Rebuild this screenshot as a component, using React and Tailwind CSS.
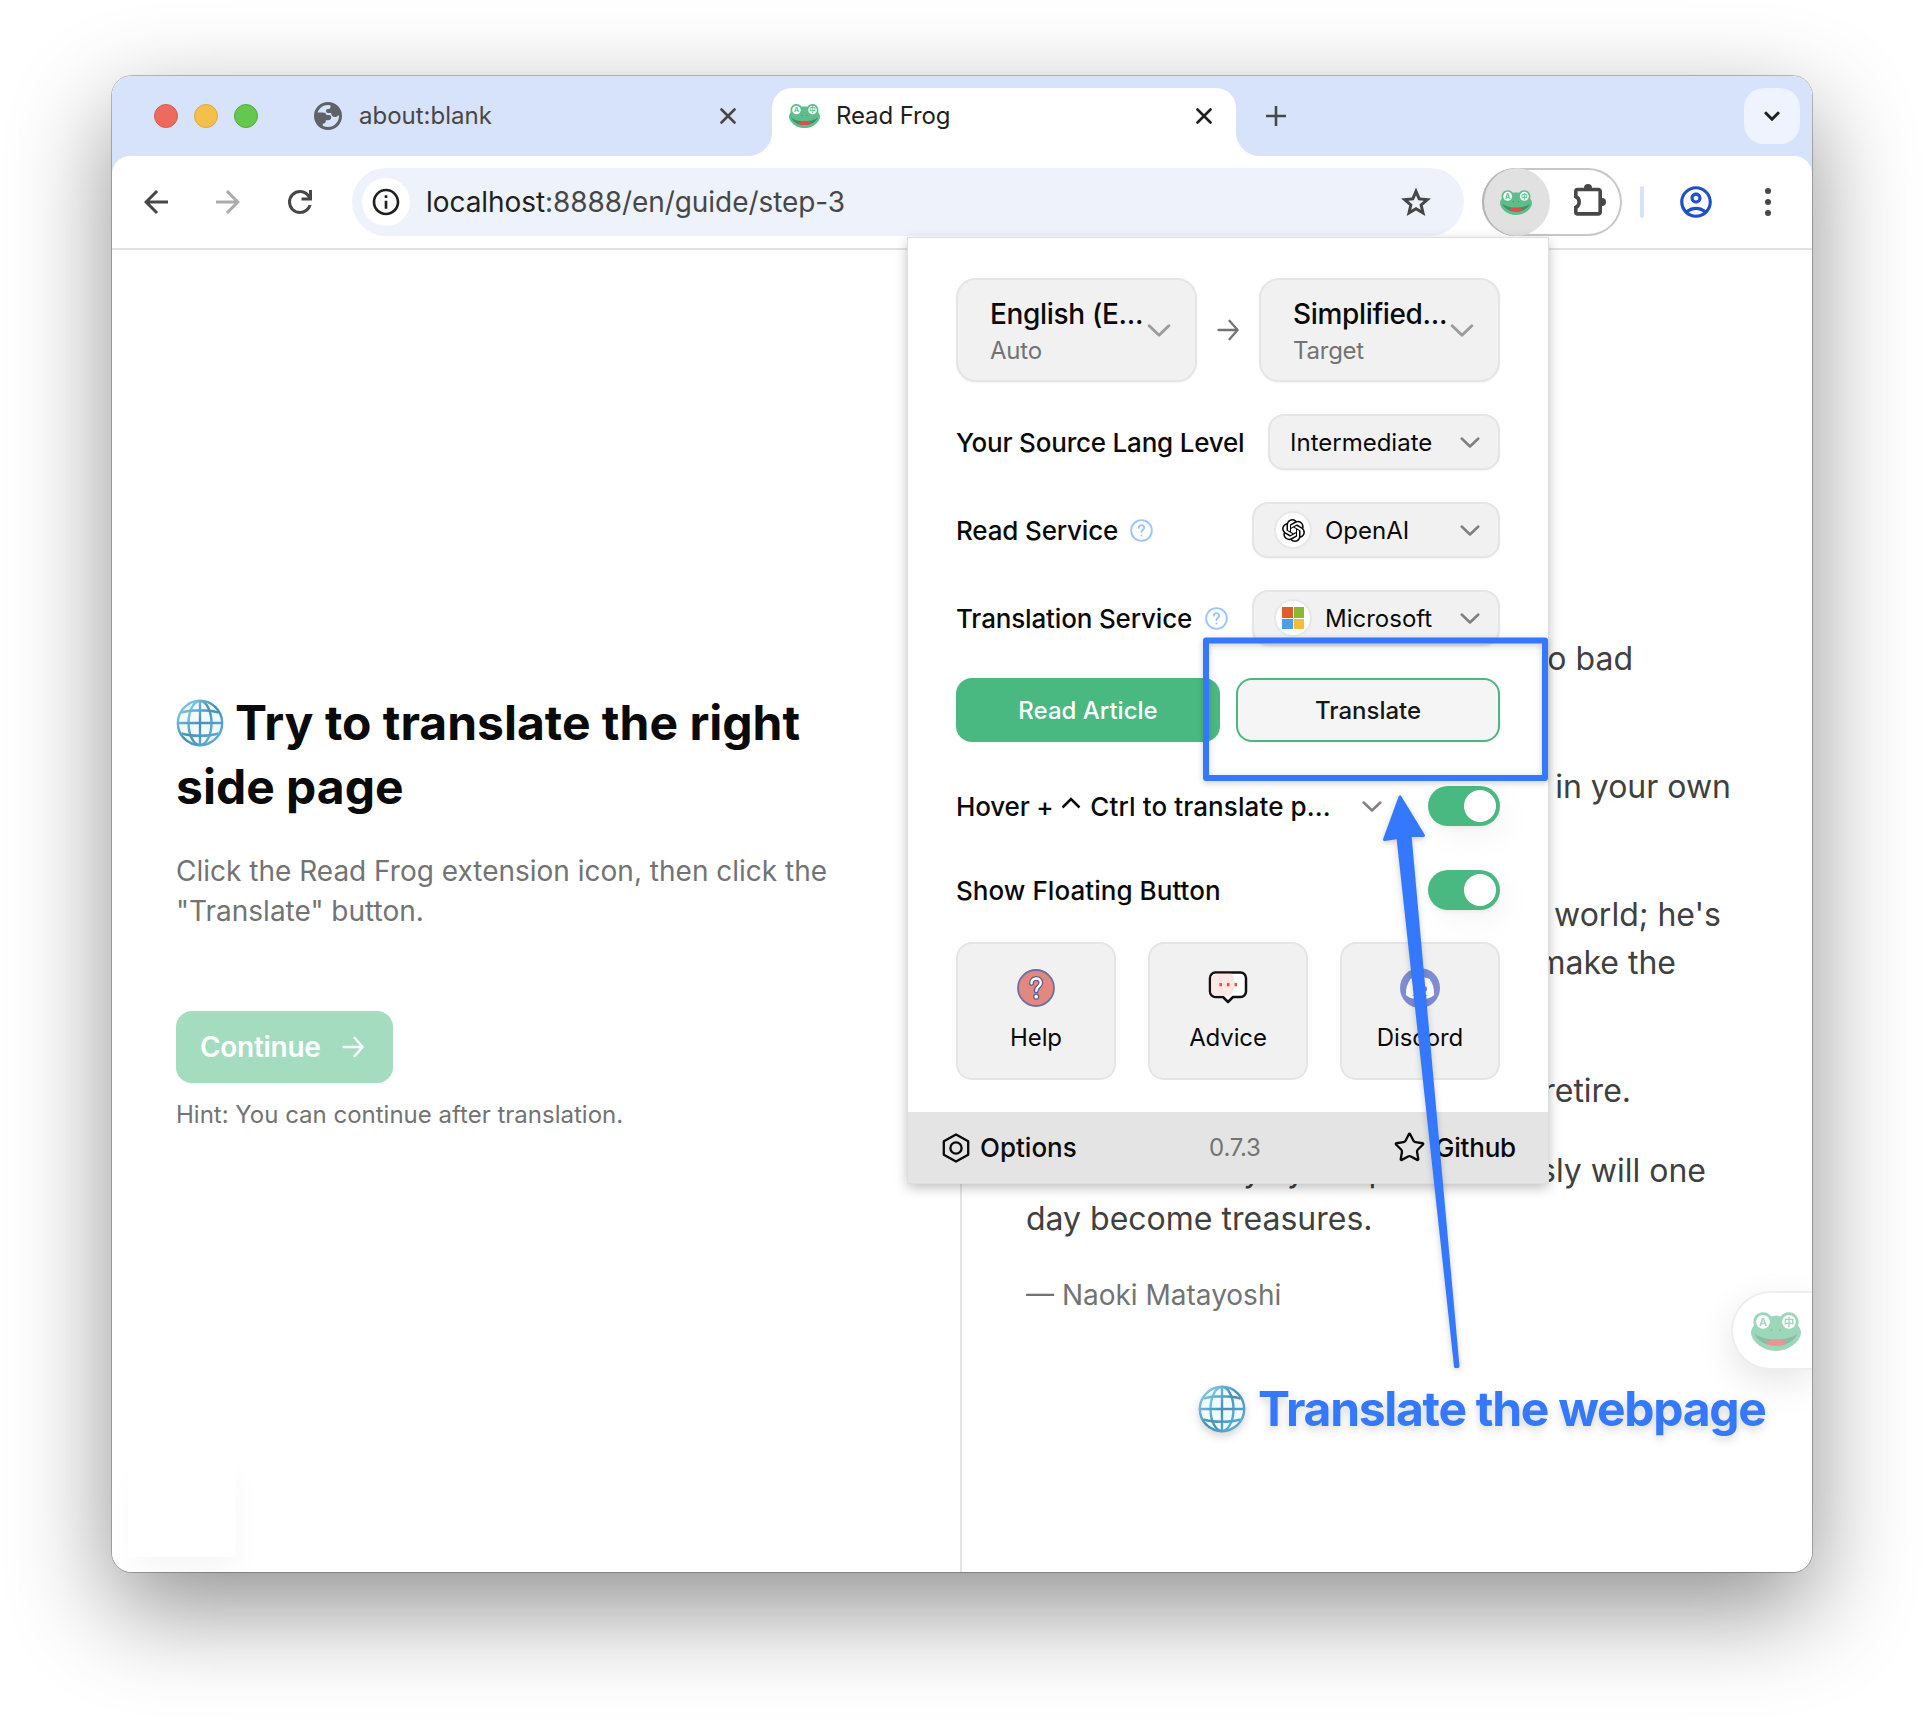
import React from "react";
import { MdArrowBack, MdArrowForward, MdInfoOutline, MdOutlineAccountCircle } from "react-icons/md";
import { SiOpenai, SiDiscord } from "react-icons/si";
import { Star } from "lucide-react";

function Frog({ className }) {
  return (
    <svg viewBox="0 0 50 39" className={className}>
      <path
        d="M12 0.2c3.6 0 6.6 1.700 8.300 4.200 3-.7 6.400-.7 9.400 0C31.400 1.900 34.400 .2 38 .2c5.500 0 9.600 4.400 9.600 9.600 0 1.300-.2 2.500-.6 3.600C49 15.600 50 18.300 50 20.600 50 29 38.500 39 25 39S0 29 0 20.600c0-2.300 1-5 3-7.200-.4-1.100-.6-2.300-.6-3.600C2.400 4.600 6.500 .2 12 .2Z"
        fill="#5dbe8c"
      />
      <path d="M3.300 21.600C9 26 17 27.600 25 27.600s16-1.600 21.700-6C43.500 29.500 34 34 25 34S6.500 29.500 3.300 21.600Z" fill="#3f9068" />
      <path d="M14 31.300c2.500-2.700 6.500-3.800 11-3.800s8.500 1.100 11 3.800C32.500 33.200 28.700 34 25 34s-7.500-.8-11-2.700Z" fill="#dd4f4f" />
      <circle cx="12" cy="9.800" r="6.900" fill="#fff" />
      <circle cx="38" cy="9.800" r="6.900" fill="#fff" />
      <circle cx="20.500" cy="18.300" r="1" fill="#3f9068" />
      <circle cx="29" cy="18.300" r="1" fill="#3f9068" />
      <text x="12" y="13.700" fontSize="11" fontWeight="700" textAnchor="middle" fill="#5dbe8c" fontFamily="Inter, sans-serif">A</text>
      <text x="38" y="13.700" fontSize="10.500" fontWeight="700" textAnchor="middle" fill="#5dbe8c" fontFamily='"Noto Sans CJK SC", sans-serif'>中</text>
    </svg>
  );
}

function GlobeEmoji({ className, id }) {
  return (
    <svg viewBox="0 0 48 48" fill="none" className={className}>
      <defs>
        <linearGradient id={id} x1="0" y1="0" x2="1" y2="1">
          <stop offset="0" stopColor="#8fd8f2" />
          <stop offset="0.500" stopColor="#4690b8" />
          <stop offset="1" stopColor="#63b4dd" />
        </linearGradient>
      </defs>
      <circle cx="24" cy="24" r="22" fill="#f3fafd" />
      <g stroke={`url(#${id})`} strokeWidth="2.400">
        <circle cx="24" cy="24" r="22.200" />
        <ellipse cx="24" cy="24" rx="11.500" ry="22" />
        <path d="M24.010 2 24 46M2 24l44 .010M5.500 13.500C16 10.500 32 10.500 42.500 13.500M5.500 34.500C16 37.500 32 37.500 42.500 34.500" />
      </g>
    </svg>
  );
}

const EarthIcon = ({ className }) => (
  <svg viewBox="0 0 28 28" className={className} fill="#5f6368">
    <circle cx="14" cy="14" r="12.500" fill="none" stroke="#5f6368" strokeWidth="3" />
    <path d="M2 10.500h6.500c3 0 3.500 1.200 4 2.500h2.500c1.800 0 2.200 1.400 2.200 2.500 0 2-1.200 2.700-3.200 2.700h-2.200c0 3-1 3.300-3 3.300v3.500C3 22 .500 16 2 10.500Z" />
    <path d="M16.500 1.800v3.400c0 1-1 1.800-2.800 1.800-1 0-1.700.8-1.700 2s.8 2 2 2h3.200c0 2.500 1.300 4 3.800 4 1.600 0 2.500-.7 3-1.500h3C27 8 22.500 2.500 16.500 1.800Z" />
  </svg>
);

const CloseIcon = ({ className }) => (
  <svg viewBox="0 0 16 16" className={className} stroke="currentColor" strokeWidth="2.600" strokeLinecap="round">
    <path d="M1.500 1.500l13 13M14.500 1.500l-13 13" />
  </svg>
);

const ArrowRight = ({ className }) => (
  <svg viewBox="0 0 22 22" className={className} fill="none" stroke="currentColor" strokeWidth="2.300" strokeLinecap="round" strokeLinejoin="round">
    <path d="M1.500 11h19M12.500 1.800 20.600 11l-8.100 9.200" />
  </svg>
);

const Chevron = ({ className }) => (
  <svg viewBox="0 0 20 11" className={className} fill="none" stroke="currentColor" strokeWidth="2.500" strokeLinecap="round" strokeLinejoin="round">
    <path d="M1.700 1.500 10 9.500l8.300-8" />
  </svg>
);

const HelpHint = ({ className }) => (
  <svg viewBox="0 0 24 24" className={className} fill="none" stroke="currentColor" strokeWidth="2" strokeLinecap="round" strokeLinejoin="round">
    <circle cx="12" cy="12" r="10.800" />
    <path d="M9.200 9.200C9.200 7.500 10.400 6.400 12 6.400s2.800 1.100 2.800 2.700c0 2.200-2.800 2.200-2.800 4.500M12 17.300h.010" />
  </svg>
);

const Microsoft = () => (
  <div className="grid size-[22px] grid-cols-2 gap-px">
    <div className="bg-[#e15b2e]" />
    <div className="bg-[#8cb82f]" />
    <div className="bg-[#4a9fe8]" />
    <div className="bg-[#f2bc3c]" />
  </div>
);

const HelpIcon = () => (
  <svg viewBox="0 0 40 40" className="size-10" fill="none" strokeLinecap="round">
    <circle cx="20" cy="20" r="18" fill="#e38781" stroke="#6a6fa5" strokeWidth="1.800" />
    <path d="M15.500 15.200c0-3 2-4.700 4.600-4.700s4.700 1.700 4.700 4.300c0 3.500-4.500 3.700-4.500 8" stroke="#5a5f98" strokeWidth="5" />
    <path d="M15.500 15.200c0-3 2-4.700 4.600-4.700s4.700 1.700 4.700 4.300c0 3.500-4.500 3.700-4.500 8" stroke="#fff" strokeWidth="2.400" />
    <circle cx="20.200" cy="28.700" r="2.500" fill="#fff" stroke="#5a5f98" strokeWidth="1.300" />
  </svg>
);

const AdviceIcon = () => (
  <svg viewBox="0 0 40 40" className="size-10" fill="none">
    <path
      d="M7.500 4.500h25A5.500 5.500 0 0 1 38 10v13.500a5.500 5.500 0 0 1-5.500 5.500H25l-5 5-5-5H7.500A5.500 5.500 0 0 1 2 23.500V10a5.500 5.500 0 0 1 5.500-5.500Z"
      fill="#fff"
      stroke="#111"
      strokeWidth="2.500"
      strokeLinejoin="round"
    />
    <path d="M3.200 10A4.500 4.500 0 0 1 8 5.700h15.500c5 6.500 4.500 15.500-1 22H8a4.700 4.700 0 0 1-4.800-4.500Z" fill="#fde8e6" />
    <path d="M12.700 15v3.200M20.200 15v3.200M27.800 15v3.200" stroke="#e5533f" strokeWidth="2.600" />
  </svg>
);

const DiscordIcon = () => (
  <div className="flex size-10 items-center justify-center rounded-full bg-[#7f8cd1] text-white">
    <SiDiscord className="size-7" />
  </div>
);

function TabStrip() {
  return (
    <div className="flex h-20 bg-[#d7e2fb] pl-[42px] pr-3">
      <div className="flex h-full items-center gap-4">
        <div className="size-6 rounded-full border border-[#d65a4d] bg-[#ec6b5e]" />
        <div className="size-6 rounded-full border border-[#dda83c] bg-[#f4bf4b]" />
        <div className="size-6 rounded-full border border-[#55ab3e] bg-[#64c74f]" />
      </div>
      <div className="ml-14 flex h-20 w-[458px] items-center text-2xl text-[#474747]">
        <EarthIcon className="size-7" />
        <span className="ml-[17px]">about:blank</span>
        <CloseIcon className="ml-auto mr-9 size-4" />
      </div>
      <div className="relative mt-3 flex h-[68px] w-[464px] rounded-t-[20px] bg-white pl-[17px] pr-6 text-[#1f1f1f]">
        <div className="absolute -left-6 bottom-0 size-6 bg-[radial-gradient(circle_at_0_0,transparent_23.5px,#fff_24.500px)]" />
        <div className="absolute -right-6 bottom-0 size-6 bg-[radial-gradient(circle_at_100%_0,transparent_23.5px,#fff_24.500px)]" />
        <div className="flex h-14 w-full items-center text-2xl tracking-[-0.005em]">
          <Frog className="w-[31px]" />
          <span className="ml-4">Read Frog</span>
          <CloseIcon className="ml-auto size-4" />
        </div>
      </div>
      <svg viewBox="0 0 20 20" className="ml-[30px] mt-[30px] size-5 text-[#474747]" stroke="currentColor" strokeWidth="2.600">
        <path d="M10 0v20M0 10h20" />
      </svg>
      <div className="ml-auto mt-3 flex size-14 items-center justify-center rounded-[20px] bg-[#eef3fe]">
        <svg viewBox="0 0 16 10" className="h-2.5 w-4" fill="none" stroke="#1f1f1f" strokeWidth="3">
          <path d="M1 1.200 8 8.200l7-7" />
        </svg>
      </div>
    </div>
  );
}

function Toolbar() {
  return (
    <div className="bg-[#d7e2fb]">
      <div className="flex h-[94px] items-start rounded-t-[18px] border-b-2 border-[#e2e2e2] bg-white pl-[26px] pt-3">
        <div className="flex h-[68px] items-center gap-9 text-[#474747]">
          <MdArrowBack className="size-9" />
          <MdArrowForward className="size-9 text-[#ababab]" />
          <svg viewBox="0 -960 960 960" className="size-9" fill="currentColor">
            <path d="M480-160q-134 0-227-93t-93-227q0-134 93-227t227-93q69 0 132 28.500T720-690v-110h80v280H520v-80h168q-32-56-87.500-88T480-720q-100 0-170 70t-70 170q0 100 70 170t170 70q77 0 139-44t87-116h84q-28 106-114 173t-196 67Z" />
          </svg>
        </div>
        <div className="ml-[34px] flex h-[68px] w-[1112px] items-center rounded-full bg-[#edf2fb] pl-[10px] pr-[30px]">
          <div className="flex size-12 items-center justify-center rounded-full bg-white text-[#1f1f1f]">
            <MdInfoOutline className="size-8" />
          </div>
          <span className="ml-4 text-[28px] leading-none tracking-[-0.0025em] text-[#474747]">
            <span className="text-[#1f1f1f]">localhost</span>:8888/en/guide/step-3
          </span>
          <svg viewBox="0 -960 960 960" className="mb-[3px] ml-auto size-9" fill="#474747">
            <path d="m354-247 126-76 126 77-33-144 111-96-146-13-58-136-58 135-146 13 111 97-33 143ZM233-80l65-281L80-550l288-25 112-265 112 265 288 25-218 189 65 281-247-149L233-80Z" />
          </svg>
        </div>
        <div className="ml-[18px] flex h-[68px] w-[140px] items-center rounded-full shadow-[inset_0_0_0_2px_#c7c7c7]">
          <div className="flex size-[68px] items-center justify-center rounded-full bg-[#e1e1e1] shadow-[inset_2px_0_0_0_#b4b4b4]">
            <Frog className="mt-px w-8" />
          </div>
          <svg viewBox="0 0 36 36" className="ml-[22px] size-9" fill="none" stroke="#474747" strokeWidth="3.600">
            <path d="M3.800 12.500V7.300a1.800 1.800 0 0 1 1.800-1.800h20.800a1.800 1.800 0 0 1 1.800 1.800v20.800a1.800 1.800 0 0 1-1.800 1.800H5.600a1.800 1.800 0 0 1-1.800-1.800v-4.600c4.500-2 4.500-9 0-11Z" className="[stroke-dasharray:none]" />
            <path d="M12 4a4 4 0 0 1 8 0ZM30 14a4 4 0 0 1 0 8Z" fill="#474747" stroke="none" />
            <path d="M1 13.700c4 0 4 8.600 0 8.600Z" fill="#fff" stroke="none" />
          </svg>
        </div>
        <div className="flex h-[68px] items-center">
          <div className="ml-[18px] h-8 w-1 rounded-full bg-[#d6e2fb]" />
          <MdOutlineAccountCircle className="ml-[33px] size-[38px] text-[#1f50c8]" />
          <div className="ml-[50px] flex flex-col gap-[5px]">
            <div className="size-1.5 rounded-full bg-[#474747]" />
            <div className="size-1.5 rounded-full bg-[#474747]" />
            <div className="size-1.5 rounded-full bg-[#474747]" />
          </div>
        </div>
      </div>
    </div>
  );
}

function LeftPane() {
  return (
    <div className="w-[848px] pl-16 pt-[441px]">
      <h1 className="text-[48px] font-bold leading-[64px] text-[#0a0a0a]">
        <span className="flex h-16 items-center">
          <GlobeEmoji id="g1" className="mr-[11px] size-12" />
          Try to translate the right
        </span>
        side page
      </h1>
      <p className="mt-8 text-[28px] leading-10 text-[#737373]">
        Click the Read Frog extension icon, then click the
        <br />
        "Translate" button.
      </p>
      <button className="mt-20 flex h-[72px] w-[217px] items-center rounded-2xl bg-[#a4dcc0] pl-6 text-[28px] font-semibold text-white shadow-xs">
        <span className="tracking-[-0.01em]">Continue</span>
        <ArrowRight className="ml-[21px] size-[22px]" />
      </button>
      <p className="mt-4 text-2xl text-[#737373]">Hint: You can continue after translation.</p>
    </div>
  );
}

function RightPane() {
  return (
    <div className="w-[852px] border-l-2 border-[#e5e5e5] pl-16 pt-[385px] text-right text-[32px] leading-[48px] text-[#404040]">
      <p className="w-[607px]">so bad</p>
      <p className="mt-20 w-[705px]">in your own</p>
      <p className="mt-20 w-[695px]">world; he's</p>
      <p className="w-[650px]">make the</p>
      <p className="mt-20 w-[605px]">retire.</p>
      <p className="mt-8 w-[680px] whitespace-nowrap">days you spent seriously will one</p>
      <p className="text-left">day become treasures.</p>
      <p className="mt-8 text-left text-[28px] leading-10 text-[#737373]">— Naoki Matayoshi</p>
    </div>
  );
}

function LangCard({ name, kind }) {
  return (
    <div className="flex h-[104px] w-[241px] items-center rounded-[20px] border-2 border-[#e5e5e5] bg-[#f1f1f1] pl-8 pt-[2px] shadow-xs">
      <div className="w-[156px] whitespace-nowrap">
        <div className="text-[28px] font-medium leading-10 tracking-[-0.012em]">{name}</div>
        <div className="text-2xl leading-[34px] tracking-[-0.01em] text-[#737373]">{kind}</div>
      </div>
      <Chevron className="mb-[2px] ml-px h-[13px] w-6 text-[#9c9c9c]" />
    </div>
  );
}

function SelectBox({ className, icon, label }) {
  return (
    <div className={`flex h-14 items-center rounded-[16px] border-2 border-[#e5e5e5] bg-[#f1f1f1] pr-[18px] text-2xl tracking-[0] shadow-xs ${className}`}>
      {icon && (
        <div className="mr-[13px] flex size-[38px] items-center justify-center rounded-full border-2 border-[#e8e8e8] bg-white">{icon}</div>
      )}
      <span className="pt-[2px]">{label}</span>
      <Chevron className="ml-auto h-[11px] w-5 text-[#808080]" />
    </div>
  );
}

const Toggle = () => (
  <div className="flex h-10 w-[72px] items-center justify-end rounded-full bg-[#4ab981] pr-1 shadow-[8px_12px_30px_rgba(0,0,0,0.04),0_2px_4px_rgba(0,0,0,0.06)]">
    <div className="size-8 rounded-full bg-white" />
  </div>
);

function LinkCard({ icon, label }) {
  return (
    <div className="flex h-[138px] flex-1 flex-col items-center rounded-2xl border-2 border-[#e5e5e5] bg-[#f1f1f1] pt-6">
      {icon}
      <span className="mt-[14px] text-2xl tracking-[-0.005em]">{label}</span>
    </div>
  );
}

function Popup() {
  return (
    <div className="absolute left-[796px] top-[162px] h-[945px] w-[640px] bg-white text-[#0a0a0a] shadow-[0_0_0_1px_#dedede,0_4px_12px_rgba(0,0,0,0.28)]">
      <div className="px-12 pt-10 text-[26px] font-medium tracking-[-0.006em]">
        <div className="flex items-center justify-between font-normal">
          <LangCard name="English (E..." kind="Auto" />
          <ArrowRight className="size-[22px] text-[#737373]" />
          <LangCard name="Simplified..." kind="Target" />
        </div>
        <div className="mt-8 flex h-14 items-center justify-between">
          <span className="pt-px tracking-[-0.008em]">Your Source Lang Level</span>
          <SelectBox className="w-[232px] pl-5 font-normal" label="Intermediate" />
        </div>
        <div className="mt-8 flex h-14 items-center">
          <span className="pt-px">Read Service</span>
          <HelpHint className="ml-3 size-[23px] text-[#9cc5fd]" />
          <SelectBox className="ml-auto w-[248px] pl-5 font-normal" icon={<SiOpenai className="size-[23px]" />} label="OpenAI" />
        </div>
        <div className="mt-8 flex h-14 items-center">
          <span className="pt-px">Translation Service</span>
          <HelpHint className="ml-[13px] size-[23px] text-[#9cc5fd]" />
          <SelectBox className="ml-auto w-[248px] pl-5 font-normal" icon={<Microsoft />} label="Microsoft" />
        </div>
        <div className="mt-8 grid h-16 grid-cols-2 gap-4 text-2xl font-medium tracking-normal">
          <button className="rounded-2xl bg-[#4ab981] pt-[2px] text-white shadow-xs">Read Article</button>
          <button className="rounded-2xl border-2 border-[#4ab981] bg-[#f5f5f5] pt-[2px] text-[#171717] shadow-xs">Translate</button>
        </div>
        <div className="mt-11 flex h-10 items-center whitespace-pre">
          <span className="pt-px">Hover + </span>
          <svg viewBox="0 0 20 12" className="mb-1.5 ml-px h-3 w-5" fill="none" stroke="currentColor" strokeWidth="2.500">
            <path d="M1.500 10.500 10 2l8.500 8.500" />
          </svg>
          <span className="ml-[9px] pt-px tracking-[0.004em]">Ctrl to translate p...</span>
          <Chevron className="ml-auto mr-[46px] h-[11px] w-5 text-[#808080]" />
          <Toggle />
        </div>
        <div className="mt-11 flex h-10 items-center justify-between">
          <span className="pt-px tracking-[0.002em]">Show Floating Button</span>
          <Toggle />
        </div>
        <div className="mt-8 flex gap-8 font-normal">
          <LinkCard icon={<HelpIcon />} label="Help" />
          <LinkCard icon={<AdviceIcon />} label="Advice" />
          <LinkCard icon={<DiscordIcon />} label="Discord" />
        </div>
      </div>
      <div className="mt-8 flex h-[71px] items-center justify-between bg-[#e4e4e4] pl-[34px] pr-8 text-[26px] font-medium">
        <div className="flex items-center gap-2.5">
          <svg viewBox="0 0 28 30" className="h-[30px] w-7" fill="none" stroke="currentColor" strokeWidth="2.300" strokeLinejoin="round">
            <path d="M14 1.500 26.200 8.300v13.400L14 28.500 1.800 21.700V8.300Z" />
            <circle cx="14" cy="15" r="5.600" />
          </svg>
          <span>Options</span>
        </div>
        <span className="pt-px text-2xl font-normal tracking-[-0.01em] text-[#737373]">0.7.3</span>
        <div className="flex items-center gap-[9px]">
          <Star className="size-[33px]" strokeWidth={1.700} />
          <span className="tracking-[-0.008em]">Github</span>
        </div>
      </div>
    </div>
  );
}

function FloatingButton() {
  return (
    <div className="absolute right-0 top-[1215px] flex h-[79px] w-[81px] items-center rounded-l-full border-2 border-r-0 border-[#eeeeee] bg-white pl-[18px] pt-[2px] shadow-[0_12px_36px_rgba(0,0,0,0.10)]">
      <Frog className="w-[50px] opacity-60" />
    </div>
  );
}

function Annotation() {
  return (
    <>
      <svg viewBox="0 0 1924 1720" className="pointer-events-none absolute left-0 top-0 h-[1720px] w-[1924px] drop-shadow-[0_2px_3px_rgba(0,0,0,0.2)]">
        <rect x="1206" y="640.500" width="339" height="137.500" fill="none" stroke="#3478fe" strokeWidth="6" strokeLinejoin="round" />
        <path d="M1400 797 1423.500 835.500 1410 835.500 1458 1366.500 1455.500 1366.500 1398 837.500 1384.500 839.500Z" fill="#3478fe" stroke="#3478fe" strokeWidth="3" strokeLinejoin="round" />
      </svg>
      <div className="absolute left-[1198px] top-[1377px] flex h-16 items-center whitespace-nowrap text-[48px] font-bold tracking-[-1.300px] text-[#3478fe] drop-shadow-[0_4px_4px_rgba(0,0,0,0.16)]">
        <GlobeEmoji id="g2" className="mr-3 size-12" />
        Translate the webpage
      </div>
    </>
  );
}

export default function App() {
  return (
    <div className="relative h-[1720px] w-[1924px] overflow-hidden bg-white pl-[112px] pt-[76px] font-['Inter',sans-serif]">
      <div className="w-[1700px] rounded-[20px] shadow-[0_0_0_1px_rgba(0,0,0,0.24),0_36px_100px_rgba(0,0,0,0.44)]">
        <div className="relative h-[1496px] overflow-hidden rounded-[20px] bg-white">
          <TabStrip />
          <Toolbar />
          <div className="flex h-[1322px]">
            <LeftPane />
            <RightPane />
          </div>
          <div className="absolute bottom-[15px] left-4 h-[100px] w-[108px] rounded bg-white shadow-[3px_18px_30px_-4px_rgba(0,0,0,0.04)]" />
          <FloatingButton />
          <Popup />
        </div>
      </div>
      <Annotation />
    </div>
  );
}
